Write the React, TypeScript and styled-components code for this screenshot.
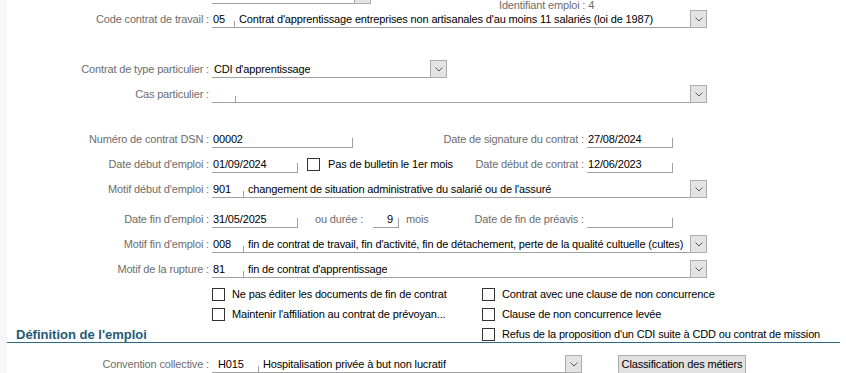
import React from 'react';
import styled, { createGlobalStyle } from 'styled-components';

const Global = createGlobalStyle`
  html, body { margin: 0; padding: 0; background: #fff; overflow: hidden; }
  #root { width: 846px; height: 373px; }
`;

const Page = styled.div`
  width: 846px;
  height: 373px;
  overflow: hidden;
  box-sizing: border-box;
  background: linear-gradient(to right, #f5f7fb 0, #f5f7fb 7px, #fff 7px);
  font-family: "Liberation Sans", Arial, sans-serif;
  font-size: 11px;
  letter-spacing: -0.15px;
  color: #000;
  display: flex;
  flex-direction: column;
`;

const Row = styled.div<{ $mt: number }>`
  display: flex;
  align-items: center;
  height: 18px;
  flex-shrink: 0;
  margin-top: ${p => p.$mt}px;
`;

const Label = styled.div<{ $w?: number }>`
  width: ${p => p.$w ?? 212}px;
  box-sizing: border-box;
  padding-right: 3px;
  text-align: right;
  color: #6d6d6d;
  white-space: nowrap;
  flex-shrink: 0;
`;

const Slot = styled.div<{ $w: number }>`
  width: ${p => p.$w}px;
  display: flex;
  align-items: center;
  flex-shrink: 0;
`;

const Muted = styled.span<{ $ml?: number }>`
  color: #6d6d6d;
  margin-left: ${p => p.$ml ?? 0}px;
  white-space: nowrap;
`;

const Field = styled.div<{ $w: number; $right?: boolean; $ml?: number }>`
  position: relative;
  width: ${p => p.$w}px;
  height: 18px;
  margin-left: ${p => p.$ml ?? 0}px;
  box-sizing: border-box;
  border-bottom: 1px solid #a0a0a0;
  display: flex;
  align-items: center;
  justify-content: ${p => (p.$right ? 'flex-end' : 'flex-start')};
  padding: ${p => (p.$right ? '0 6px 0 0' : '0 0 0 1px')};
  flex-shrink: 0;
  white-space: nowrap;
  &::after {
    content: '';
    position: absolute;
    right: 0;
    bottom: 0;
    width: 1px;
    height: 9px;
    background: #a0a0a0;
  }
`;

const ComboBox = styled.div<{ $w: number }>`
  display: flex;
  width: ${p => p.$w}px;
  height: 18px;
  flex-shrink: 0;
`;

const ComboField = styled.div`
  flex: 1;
  min-width: 0;
  display: flex;
  align-items: center;
  border-bottom: 1px solid #a0a0a0;
  white-space: nowrap;
  overflow: hidden;
`;

const Code = styled.div<{ $w: number; $pad?: number }>`
  position: relative;
  width: ${p => p.$w}px;
  height: 100%;
  box-sizing: border-box;
  padding-left: ${p => p.$pad ?? 1}px;
  display: flex;
  align-items: center;
  flex-shrink: 0;
  &::after {
    content: '';
    position: absolute;
    right: 0;
    bottom: 0;
    width: 1px;
    height: 6px;
    background: #a0a0a0;
  }
`;

const Desc = styled.div<{ $pad?: number }>`
  padding-left: ${p => p.$pad ?? 4}px;
  white-space: nowrap;
  overflow: hidden;
`;

const DropButton = styled.div`
  width: 17px;
  height: 18px;
  box-sizing: border-box;
  border: 1px solid #adadad;
  background: #e3e3e3;
  display: flex;
  align-items: center;
  justify-content: center;
  flex-shrink: 0;
`;

const Chevron = () => (
  <svg width="8" height="5" viewBox="0 0 8 5">
    <path d="M0.5 0.5 L4 4 L7.5 0.5" fill="none" stroke="#5a5a5a" strokeWidth="1" />
  </svg>
);

const TopRow = styled.div`
  display: flex;
  align-items: flex-end;
  height: 18px;
  margin-top: -14px;
  flex-shrink: 0;
`;

const TopInfo = styled.div`
  color: #6d6d6d;
  margin-left: 128px;
  margin-bottom: -8px;
  line-height: 14px;
  white-space: nowrap;
`;

const Box = styled.span`
  width: 13px;
  height: 13px;
  box-sizing: border-box;
  border: 1px solid #333;
  background: #fff;
  flex-shrink: 0;
`;

const CheckItem = styled.label<{ $w?: number; $ml?: number; $gap?: number }>`
  display: flex;
  align-items: center;
  gap: ${p => p.$gap ?? 7}px;
  width: ${p => (p.$w ? `${p.$w}px` : 'auto')};
  margin-left: ${p => p.$ml ?? 0}px;
  white-space: nowrap;
  flex-shrink: 0;
  height: 14px;
`;

const CheckRow = styled.div<{ $mt: number }>`
  display: flex;
  align-items: center;
  height: 14px;
  flex-shrink: 0;
  margin-top: ${p => p.$mt}px;
  padding-left: 212px;
`;

const SectionRow = styled.div`
  display: flex;
  align-items: flex-start;
  height: 15px;
  flex-shrink: 0;
  margin: 6px 6px 0 7px;
  border-bottom: 1px solid #2f6a82;
`;

const SectionTitle = styled.div`
  width: 475px;
  box-sizing: border-box;
  padding-left: 9px;
  font-weight: bold;
  font-size: 13px;
  letter-spacing: 0;
  line-height: 15px;
  color: #245a74;
  white-space: nowrap;
`;

const PushButton = styled.div<{ $ml: number }>`
  margin-left: ${p => p.$ml}px;
  width: 128px;
  height: 19px;
  box-sizing: border-box;
  border: 1px solid #adadad;
  background: #e1e1e1;
  display: flex;
  align-items: center;
  justify-content: center;
  white-space: nowrap;
  flex-shrink: 0;
`;

type ComboProps = { w: number; code?: string; codeW?: number; codePad?: number; text?: string; descPad?: number };

const Combo = ({ w, code, codeW, codePad, text, descPad }: ComboProps) => (
  <ComboBox $w={w}>
    <ComboField>
      {codeW !== undefined && (
        <Code $w={codeW} $pad={codePad}>
          {code}
        </Code>
      )}
      <Desc $pad={descPad}>{text}</Desc>
    </ComboField>
    <DropButton>
      <Chevron />
    </DropButton>
  </ComboBox>
);

export default function App() {
  return (
    <>
      <Global />
      <Page>
        <TopRow>
          <Slot $w={212} />
          <ComboBox $w={159}>
            <ComboField />
            <DropButton>
              <Chevron />
            </DropButton>
          </ComboBox>
          <TopInfo>Identifiant emploi : 4</TopInfo>
        </TopRow>

        <Row $mt={6}>
          <Label>Code contrat de travail :</Label>
          <Combo
            w={495}
            code="05"
            codeW={23}
            text="Contrat d'apprentissage entreprises non artisanales d'au moins 11 salariés (loi de 1987)"
          />
        </Row>

        <Row $mt={32}>
          <Label>Contrat de type particulier :</Label>
          <Combo w={235} text="CDI d'apprentissage" descPad={2} />
        </Row>

        <Row $mt={7}>
          <Label>Cas particulier :</Label>
          <Combo w={495} code="" codeW={24} text="" />
        </Row>

        <Row $mt={27}>
          <Label>Numéro de contrat DSN :</Label>
          <Slot $w={218}>
            <Field $w={141}>00002</Field>
          </Slot>
          <Label $w={157}>Date de signature du contrat :</Label>
          <Field $w={86}>27/08/2024</Field>
        </Row>

        <Row $mt={7}>
          <Label>Date début d'emploi :</Label>
          <Slot $w={218}>
            <Field $w={86}>01/09/2024</Field>
            <CheckItem $ml={9} $gap={8}>
              <Box />
              Pas de bulletin le 1er mois
            </CheckItem>
          </Slot>
          <Label $w={157}>Date début de contrat :</Label>
          <Field $w={86}>12/06/2023</Field>
        </Row>

        <Row $mt={7}>
          <Label>Motif début d'emploi :</Label>
          <Combo
            w={495}
            code="901"
            codeW={32}
            text="changement de situation administrative du salarié ou de l'assuré"
          />
        </Row>

        <Row $mt={12}>
          <Label>Date fin d'emploi :</Label>
          <Slot $w={218}>
            <Field $w={86}>31/05/2025</Field>
            <Muted $ml={17}>ou durée :</Muted>
            <Field $w={26} $right $ml={10}>
              9
            </Field>
            <Muted $ml={7}>mois</Muted>
          </Slot>
          <Label $w={157}>Date de fin de préavis :</Label>
          <Field $w={86} />
        </Row>

        <Row $mt={7}>
          <Label>Motif fin d'emploi :</Label>
          <Combo
            w={495}
            code="008"
            codeW={32}
            text="fin de contrat de travail, fin d'activité, fin de détachement, perte de la qualité cultuelle (cultes)"
          />
        </Row>

        <Row $mt={7}>
          <Label>Motif de la rupture :</Label>
          <Combo w={495} code="81" codeW={32} text="fin de contrat d'apprentissage" />
        </Row>

        <CheckRow $mt={9}>
          <CheckItem $w={270}>
            <Box />
            Ne pas éditer les documents de fin de contrat
          </CheckItem>
          <CheckItem>
            <Box />
            Contrat avec une clause de non concurrence
          </CheckItem>
        </CheckRow>

        <CheckRow $mt={6}>
          <CheckItem $w={270}>
            <Box />
            Maintenir l'affiliation au contrat de prévoyan...
          </CheckItem>
          <CheckItem>
            <Box />
            Clause de non concurrence levée
          </CheckItem>
        </CheckRow>

        <SectionRow>
          <SectionTitle>Définition de l'emploi</SectionTitle>
          <CheckItem>
            <Box />
            Refus de la proposition d'un CDI suite à CDD ou contrat de mission
          </CheckItem>
        </SectionRow>

        <Row $mt={12}>
          <Label>Convention collective :</Label>
          <Combo
            w={370}
            code="H015"
            codeW={47}
            codePad={6}
            text="Hospitalisation privée à but non lucratif"
            descPad={4}
          />
          <PushButton $ml={36}>Classification des métiers</PushButton>
        </Row>
      </Page>
    </>
  );
}
